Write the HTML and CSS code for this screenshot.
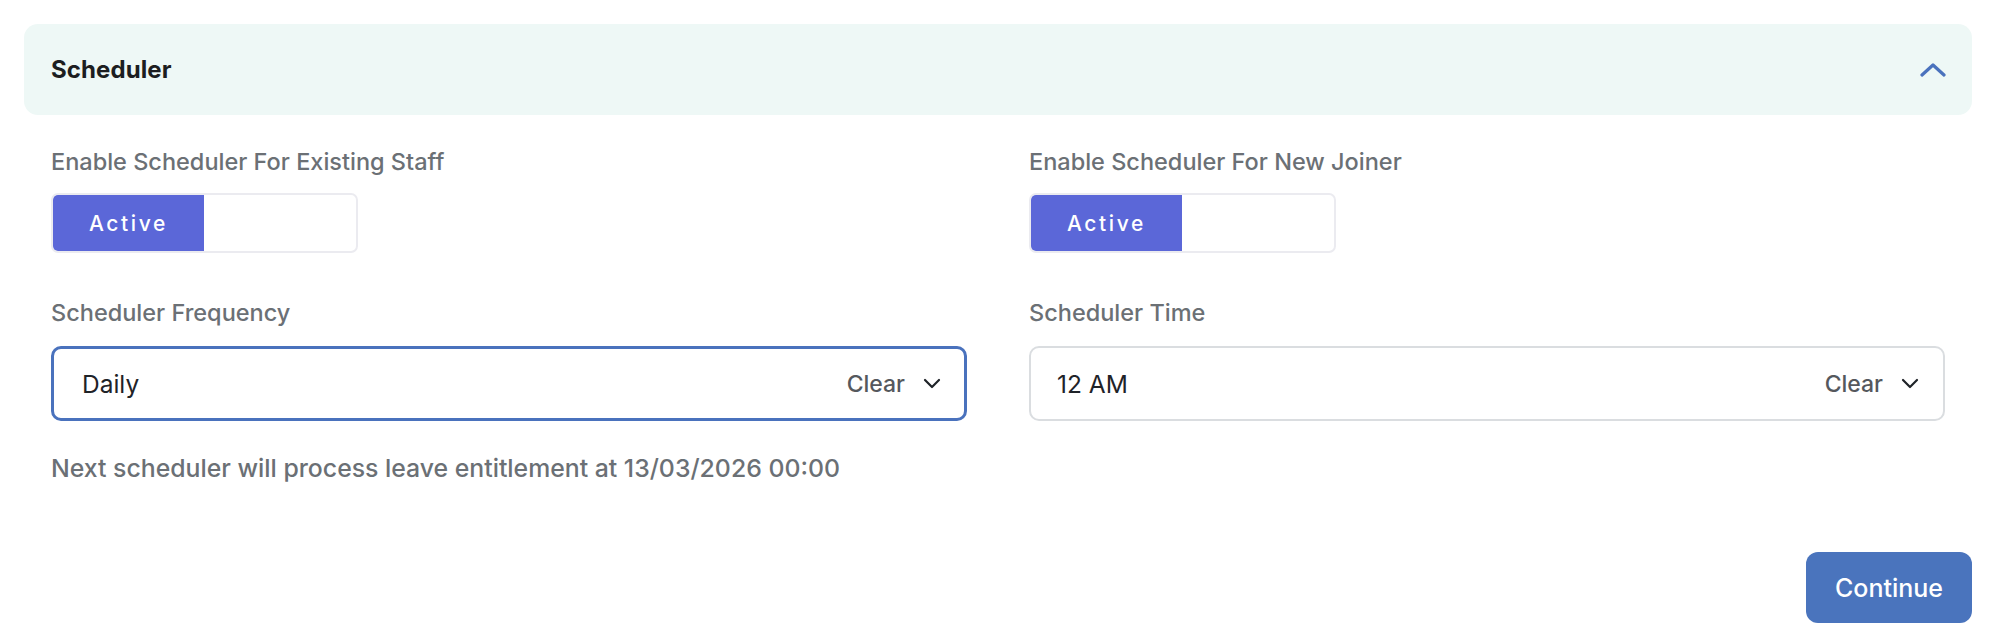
FILE: index.html
```html
<!DOCTYPE html>
<html lang="en">
<head>
<meta charset="utf-8">
<title>Scheduler</title>
<link rel="stylesheet" href="styles.css">
</head>
<body>
<section class="accordion">
  <header class="acc-header">
    <h2 class="acc-title">Scheduler</h2>
    <svg class="acc-chevron" width="26" height="14" viewBox="0 0 26 14" aria-hidden="true">
      <path d="M2 12 L13 2 L24 12" fill="none" stroke="#4a72bd" stroke-width="3.2" stroke-linecap="round" stroke-linejoin="round"/>
    </svg>
  </header>
  <div class="acc-body">
    <div class="grid">
      <div class="field">
        <div class="label">Enable Scheduler For Existing Staff</div>
        <div class="toggle">
          <span class="toggle-on">Active</span>
          <span class="toggle-off"></span>
        </div>
      </div>
      <div class="field">
        <div class="label">Enable Scheduler For New Joiner</div>
        <div class="toggle">
          <span class="toggle-on">Active</span>
          <span class="toggle-off"></span>
        </div>
      </div>
      <div class="field field-second">
        <div class="label">Scheduler Frequency</div>
        <div class="select select-focused">
          <span class="select-value">Daily</span>
          <span class="select-clear">Clear</span>
          <svg class="select-caret" width="18" height="11" viewBox="0 0 18 11" aria-hidden="true">
            <path d="M2 2 L9 9 L16 2" fill="none" stroke="#1f2328" stroke-width="2.2" stroke-linecap="round" stroke-linejoin="round"/>
          </svg>
        </div>
      </div>
      <div class="field field-second">
        <div class="label">Scheduler Time</div>
        <div class="select">
          <span class="select-value">12 AM</span>
          <span class="select-clear">Clear</span>
          <svg class="select-caret" width="18" height="11" viewBox="0 0 18 11" aria-hidden="true">
            <path d="M2 2 L9 9 L16 2" fill="none" stroke="#1f2328" stroke-width="2.2" stroke-linecap="round" stroke-linejoin="round"/>
          </svg>
        </div>
      </div>
    </div>
    <p class="note">Next scheduler will process leave entitlement at 13/03/2026 00:00</p>
  </div>
  <div class="actions">
    <button class="btn-primary" type="button">Continue</button>
  </div>
</section>
</body>
</html>
```

FILE: styles.css
```css
* { box-sizing: border-box; }

html, body {
  margin: 0;
  background: #ffffff;
}

body {
  padding: 24px 24px 0 24px;
  font-family: Inter, "Noto Sans", "Liberation Sans", sans-serif;
  color: #1f2328;
}

.acc-header {
  display: flex;
  align-items: center;
  justify-content: space-between;
  height: 91px;
  padding: 0 26px 0 27px;
  background: #eef8f6;
  border-radius: 14px;
}

.acc-title {
  margin: 0;
  font-size: 24px;
  font-weight: 700;
  color: #1c1e21;
  letter-spacing: 0.1px;
}

.acc-chevron {
  display: block;
}

.acc-body {
  padding: 33px 27px 0 27px;
}

.grid {
  display: grid;
  grid-template-columns: 1fr 1fr;
  column-gap: 62px;
  row-gap: 46px;
}

.field {
  display: flex;
  flex-direction: column;
  gap: 17px;
}

.field-second {
  gap: 19px;
}

.label {
  font-size: 23.5px;
  line-height: 28px;
  font-weight: 500;
  color: #6b7075;
}

.toggle {
  display: flex;
  width: 307px;
  height: 60px;
  border: 2px solid #ebebf0;
  border-radius: 7px;
  overflow: hidden;
  background: #fff;
}

.toggle-on {
  flex: 0 0 151px;
  display: flex;
  align-items: center;
  justify-content: center;
  background: #5b67d8;
  color: #ffffff;
  font-size: 21px;
  font-weight: 500;
  letter-spacing: 2.6px;
  border-radius: 4px 0 0 4px;
}

.toggle-off {
  flex: 1;
}

.select {
  display: flex;
  align-items: center;
  height: 75px;
  padding: 0 24px 0 26px;
  border: 2px solid #dadde0;
  border-radius: 10px;
  background: #fff;
}

.select-focused {
  border: 3px solid #4a72bd;
  padding: 0 23px 0 28px;
}

.select-value {
  flex: 1;
  font-size: 24.5px;
  color: #1f2328;
}

.select-clear {
  font-size: 23px;
  font-weight: 500;
  color: #55585d;
  margin-right: 18px;
}

.select-caret {
  display: block;
}

.note {
  margin: 33px 0 0 0;
  font-size: 24.8px;
  line-height: 28px;
  font-weight: 500;
  color: #6b7075;
}

.actions {
  display: flex;
  justify-content: flex-end;
  margin-top: 70px;
}

.btn-primary {
  width: 166px;
  height: 71px;
  border: none;
  border-radius: 12px;
  background: #4a74bd;
  color: #ffffff;
  font-family: inherit;
  font-size: 25px;
  font-weight: 500;
  cursor: pointer;
}
```
